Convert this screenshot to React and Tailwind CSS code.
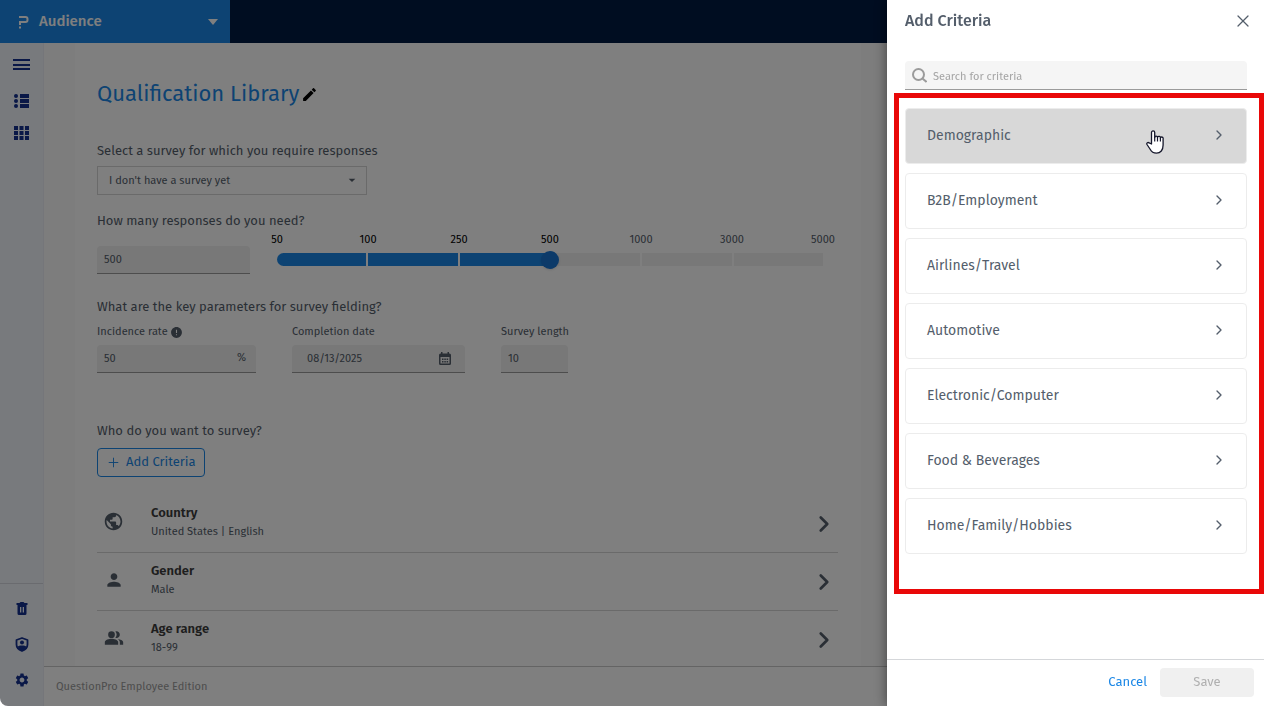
import React, { useState } from 'react';
import {
    MdPublic,
    MdPerson,
    MdPeopleAlt,
    MdEdit,
    MdSettings,
    MdError,
    MdArrowDropDown,
} from 'react-icons/md';
import { Plus, X, ChevronRight } from 'lucide-react';

const STEPS = ['50', '100', '250', '500', '1000', '3000', '5000'];

const CRITERIA = [
    'Demographic',
    'B2B/Employment',
    'Airlines/Travel',
    'Automotive',
    'Electronic/Computer',
    'Food & Beverages',
    'Home/Family/Hobbies',
];

const SELECTED = [
    { name: 'Country', value: 'United States | English', icon: <MdPublic size={21} /> },
    { name: 'Gender', value: 'Male', icon: <MdPerson size={20} /> },
    { name: 'Age range', value: '18-99', icon: <MdPeopleAlt size={20} /> },
];

const Logo = () => (
    <svg width="12" height="14" viewBox="0 0 12 14" fill="none" stroke="white" strokeWidth="2">
        <path d="M2 2h6.500a2 2 0 0 1 2 2v1a2 2 0 0 1-2 2H3v3" />
        <path d="M2 7h2M2 12.500h2" />
    </svg>
);

const TrashIcon = () => (
    <svg width="12" height="13" viewBox="0 0 12 13" fill="currentColor">
        <path d="M0.500 1h3l1-1h3l1 1h3v2h-11z" />
        <path fillRule="evenodd" d="M1.500 3h9v8.500a1.500 1.500 0 0 1-1.500 1.500h-6a1.500 1.500 0 0 1-1.500-1.500zM4 5v5.500h1.300v-5.500zM6.700 5v5.500h1.300v-5.500z" />
    </svg>
);

const ShieldIcon = () => (
    <svg width="14" height="15" viewBox="0 0 14 15">
        <path d="M7 1 12.500 3v4.500c0 3-2.300 5.300-5.500 6.500C3.800 12.800 1.500 10.500 1.500 7.500V3z" fill="none" stroke="currentColor" strokeWidth="1.800" strokeLinejoin="round" />
        <circle cx="7" cy="5.500" r="2" fill="currentColor" />
        <path d="M2.500 9.500C4 8 10 8 11.500 9.500 10.500 12 9 13 7 14 5 13 3.500 12 2.500 9.500z" fill="currentColor" />
    </svg>
);

const ListIcon = () => (
    <svg width="15" height="14" viewBox="0 0 15 14" fill="currentColor">
        <circle cx="2" cy="2" r="2" />
        <circle cx="2" cy="7" r="2" />
        <circle cx="2" cy="12" r="2" />
        <path d="M6 0h9v4H6zM6 5h9v4H6zM6 10h9v4H6z" />
    </svg>
);

const GridIcon = () => (
    <svg width="15" height="14" viewBox="0 0 15 14" fill="currentColor">
        <path d="M0 0h4v4H0zM5.500 0h4v4h-4zM11 0h4v4h-4zM0 5h4v4H0zM5.500 5h4v4h-4zM11 5h4v4h-4zM0 10h4v4H0zM5.500 10h4v4h-4zM11 10h4v4h-4z" />
    </svg>
);

const MenuIcon = () => (
    <svg width="17" height="12" viewBox="0 0 17 12" fill="currentColor">
        <path d="M0 0h17v2H0zM0 5h17v2H0zM0 9h17v2H0z" />
    </svg>
);

const CalendarIcon = () => (
    <svg width="12" height="13" viewBox="0 0 12 13">
        <path fill="currentColor" d="M2 0h1.500v1.500h5V0H10v1.500h.5A1.500 1.500 0 0 1 12 3v8.500a1.500 1.500 0 0 1-1.500 1.500h-9A1.500 1.500 0 0 1 0 11.500V3a1.500 1.500 0 0 1 1.500-1.500H2z" />
        <path fill="#f0f0f0" d="M1.500 5h9v6.500h-9z" />
        <path fill="currentColor" d="M3 6.500h1.500V8H3zM5.300 6.500h1.500V8H5.300zM7.600 6.500h1.500V8H7.600zM3 9h1.500v1.500H3zM5.300 9h1.500v1.500H5.300zM7.600 9h1.500v1.500H7.600z" />
    </svg>
);

const SearchIcon = () => (
    <svg width="15" height="15" viewBox="0 0 15 15" fill="none" stroke="#9b9b9b" strokeWidth="2">
        <circle cx="6.500" cy="6.500" r="5.500" />
        <path d="m10.500 10.500 4 3.500" />
    </svg>
);

const HandCursor = () => (
    <svg width="18" height="24" viewBox="0 0 18 24" className="pointer-events-none absolute top-[21px] right-[82px]">
        <path
            d="M5.500 14V2.500a1.600 1.600 0 0 1 3.200 0V7.500a1.400 1.400 0 0 1 2.800 0 1.400 1.400 0 0 1 2.900.5 1.400 1.400 0 0 1 2.700.8V15c0 5-2.600 8.200-6.600 8.200-3.500 0-5.200-1.700-6.500-4.200L1 14.500c-.8-1.600 1-2.600 2.200-1.600z"
            fill="white"
            stroke="#15172b"
            strokeWidth="1.300"
            strokeLinejoin="round"
        />
        <path d="M8.700 7v4.500M11.500 7.500v4M14.400 8v3.500" stroke="#15172b" strokeWidth="1.200" />
    </svg>
);

const SideButton = ({ label, children }) => (
    <button type="button" aria-label={label} className="flex h-4 w-full items-center justify-center">
        {children}
    </button>
);

const fieldClass = 'block h-7 w-full rounded-t-sm border-b border-[#9b9b9b] bg-[#f0f0f0] px-[7px] text-[11px] outline-none';

const App = () => {
    const [step, setStep] = useState(3);
    const [responses, setResponses] = useState('500');
    const [rate, setRate] = useState('50');
    const [date, setDate] = useState('08/13/2025');
    const [length, setLength] = useState('10');
    const [search, setSearch] = useState('');

    return (
        <div className="relative flex h-screen flex-col overflow-hidden rounded-b-lg bg-white font-['Fira_Sans','Roboto',sans-serif] text-[13px] text-[#545e6b]">
            {/* Top bar */}
            <header className="flex h-[43px] shrink-0 bg-[#001a42]">
                <button type="button" className="flex w-[230px] items-center bg-[#1b87e6] pr-[11px] pl-[17px] text-[15px] font-medium text-white">
                    <Logo />
                    <span className="ml-[10px] flex-1 text-left">Audience</span>
                    <svg width="12" height="6" viewBox="0 0 12 6" fill="white">
                        <path d="M1 0h10l-5 6z" />
                    </svg>
                </button>
            </header>

            <div className="flex min-h-0 flex-1">
                {/* Icon rail */}
                <nav className="flex w-[44px] shrink-0 flex-col justify-between border-r border-[#eaedf5] bg-[#f1f4fb] text-[#14308f]">
                    <div className="flex flex-col gap-4 pt-[14px]">
                        <div className="mb-1">
                            <SideButton label="Menu"><MenuIcon /></SideButton>
                        </div>
                        <SideButton label="List view"><ListIcon /></SideButton>
                        <SideButton label="Grid view"><GridIcon /></SideButton>
                    </div>
                    <div className="flex flex-col gap-5 border-t border-[#d5d7de] pt-4 pb-[18px]">
                        <SideButton label="Trash"><TrashIcon /></SideButton>
                        <SideButton label="Privacy"><ShieldIcon /></SideButton>
                        <SideButton label="Settings"><MdSettings size={16} /></SideButton>
                    </div>
                </nav>

                <div className="flex min-w-0 flex-1 flex-col">
                    <main className="min-h-0 flex-1 overflow-y-auto bg-[#fbfbfb] pl-[31px] [scrollbar-width:none]">
                        <div className="max-w-[786px] bg-white pt-[35px] pr-[23px] pl-[22px]">
                            <div className="flex items-center gap-[2px]">
                                <h1 className="text-[22px] leading-8 text-[#1b87e6]">Qualification Library</h1>
                                <button type="button" aria-label="Edit name" className="pt-px text-black">
                                    <MdEdit size={17} />
                                </button>
                            </div>

                            <label htmlFor="survey" className="mt-[31px] block leading-5">
                                Select a survey for which you require responses
                            </label>
                            <div className="relative mt-[5px] w-[270px]">
                                <select id="survey" className="block h-[29px] w-full appearance-none border border-[#d5d5d5] bg-white pt-px pl-[11px] text-[11px] outline-none">
                                    <option>I don't have a survey yet</option>
                                </select>
                                <MdArrowDropDown size={16} className="pointer-events-none absolute top-[6px] right-[7px]" />
                            </div>

                            <label htmlFor="responses" className="mt-4 block leading-5">
                                How many responses do you need?
                            </label>
                            <div className="flex gap-[27px]">
                                <div className="w-[153px] pt-[15px]">
                                    <input
                                        id="responses"
                                        className={fieldClass}
                                        value={responses}
                                        onChange={(e) => setResponses(e.target.value)}
                                    />
                                </div>
                                <div className="max-w-[546px] flex-1">
                                    <div className="flex justify-between text-[11px] leading-[18px]">
                                        {STEPS.map((label, i) => (
                                            <span key={label} className={`flex w-0 justify-center ${i <= step ? 'text-black' : ''}`}>
                                                {label}
                                            </span>
                                        ))}
                                    </div>
                                    <div className="relative mt-1 h-[13px]">
                                        <div className="flex h-full gap-[2px] overflow-hidden rounded-l-full rounded-r-sm">
                                            {STEPS.slice(1).map((label, i) => (
                                                <div key={label} className={`flex-1 ${i < step ? 'bg-[#1b87e6]' : 'bg-[#f0f0f0]'}`} />
                                            ))}
                                        </div>
                                        <input
                                            type="range"
                                            aria-label="Number of responses"
                                            min="0"
                                            max="6"
                                            value={step}
                                            onChange={(e) => {
                                                setStep(Number(e.target.value));
                                                setResponses(STEPS[e.target.value]);
                                            }}
                                            className="absolute inset-0 h-full w-full appearance-none bg-transparent [&::-webkit-slider-thumb]:size-[18px] [&::-webkit-slider-thumb]:appearance-none [&::-webkit-slider-thumb]:rounded-full [&::-webkit-slider-thumb]:bg-[#1875d2] [&::-webkit-slider-thumb]:shadow"
                                        />
                                    </div>
                                </div>
                            </div>

                            <h2 className="mt-[23px] leading-5">What are the key parameters for survey fielding?</h2>
                            <div className="mt-[5px] flex gap-9 text-[11px]">
                                <div className="w-[159px]">
                                    <div className="flex items-center gap-[2px]">
                                        <label htmlFor="rate" className="leading-5">Incidence rate</label>
                                        <MdError size={13} />
                                    </div>
                                    <div className="relative mt-[3px]">
                                        <input id="rate" className={fieldClass} value={rate} onChange={(e) => setRate(e.target.value)} />
                                        <span className="absolute top-[5px] right-[10px]">%</span>
                                    </div>
                                </div>
                                <div className="w-[173px]">
                                    <label htmlFor="date" className="block leading-5">Completion date</label>
                                    <div className="relative mt-[3px]">
                                        <input id="date" className={`indent-2 ${fieldClass}`} value={date} onChange={(e) => setDate(e.target.value)} />
                                        <span className="absolute top-[7px] right-[14px]"><CalendarIcon /></span>
                                    </div>
                                </div>
                                <div className="w-[67px]">
                                    <label htmlFor="length" className="block leading-5 whitespace-nowrap">Survey length</label>
                                    <div className="mt-[3px]">
                                        <input id="length" className={fieldClass} value={length} onChange={(e) => setLength(e.target.value)} />
                                    </div>
                                </div>
                            </div>

                            <h2 className="mt-12 leading-5">Who do you want to survey?</h2>
                            <button type="button" className="mt-[7px] flex h-[29px] items-center gap-[5px] rounded-sm border border-[#1b87e6] px-2 pb-px text-[#1b87e6]">
                                <Plus size={15} strokeWidth={1.5} />
                                Add Criteria
                            </button>

                            <ul className="mt-[18px]">
                                {SELECTED.map((item) => (
                                    <li key={item.name} className="flex h-[58px] items-center border-b border-[#d5d5d5]">
                                        <span className="flex w-[33px] justify-center pb-1">{item.icon}</span>
                                        <div className="ml-[21px] flex-1 pb-1">
                                            <p className="leading-5 font-semibold text-[#3c3c3c]">{item.name}</p>
                                            <p className="text-[11px] leading-[18px]">{item.value}</p>
                                        </div>
                                        <button type="button" aria-label={`Edit ${item.name}`} className="pr-px">
                                            <ChevronRight size={26} strokeWidth={2.5} />
                                        </button>
                                    </li>
                                ))}
                            </ul>
                        </div>
                    </main>
                    <footer className="flex h-10 shrink-0 items-center border-t border-[#c8c8c8] pt-px pl-3 text-[11px] text-[#9b9b9b]">
                        QuestionPro Employee Edition
                    </footer>
                </div>
            </div>

            {/* Backdrop */}
            <div className="absolute inset-0 bg-black/50" />

            {/* Add criteria drawer */}
            <aside className="absolute inset-y-0 right-0 flex w-[377px] flex-col bg-white shadow-[0_0_12px_rgba(0,0,0,0.5)]">
                <div className="flex h-[43px] items-center justify-between pr-[11px] pb-px pl-[18px]">
                    <h2 className="text-[16px] font-medium">Add Criteria</h2>
                    <button type="button" aria-label="Close">
                        <X size={20} strokeWidth={1.5} />
                    </button>
                </div>

                <div className="mt-[18px] mr-[17px] ml-[18px] flex h-[29px] shrink-0 items-center gap-[6px] rounded-t-sm border-b border-[#9b9b9b] bg-[#f5f5f5] pl-[7px]">
                    <SearchIcon />
                    <input
                        type="text"
                        aria-label="Search for criteria"
                        placeholder="Search for criteria"
                        value={search}
                        onChange={(e) => setSearch(e.target.value)}
                        className="h-full flex-1 bg-transparent pt-[2px] text-[11px] outline-none placeholder:text-[#a5a5a5]"
                    />
                </div>

                <div className="mt-[3px] ml-[7px] flex flex-col gap-[9px] border-5 border-[#e90808] pt-[10px] pr-3 pb-[35px] pl-[6px]">
                    {CRITERIA.map((name, i) => (
                        <button
                            key={name}
                            type="button"
                            className={`relative flex h-14 items-center justify-between rounded border border-[#ececec] pr-[19px] pb-[2px] pl-[21px] text-[14px] ${i === 0 ? 'bg-[#d8d8d8]' : 'bg-white'}`}
                        >
                            {name}
                            <ChevronRight size={16} strokeWidth={2} />
                            {i === 0 && <HandCursor />}
                        </button>
                    ))}
                </div>

                <div className="mt-auto flex h-[47px] items-center justify-end gap-[13px] border-t border-[#d5d7da] pr-[10px] pb-[2px]">
                    <button type="button" className="text-[#1b87e6]">Cancel</button>
                    <button type="button" disabled className="h-[29px] w-[94px] rounded-sm bg-[#f0f0f0] text-[#b0b0b0]">
                        Save
                    </button>
                </div>
            </aside>
        </div>
    );
};

export default App;
